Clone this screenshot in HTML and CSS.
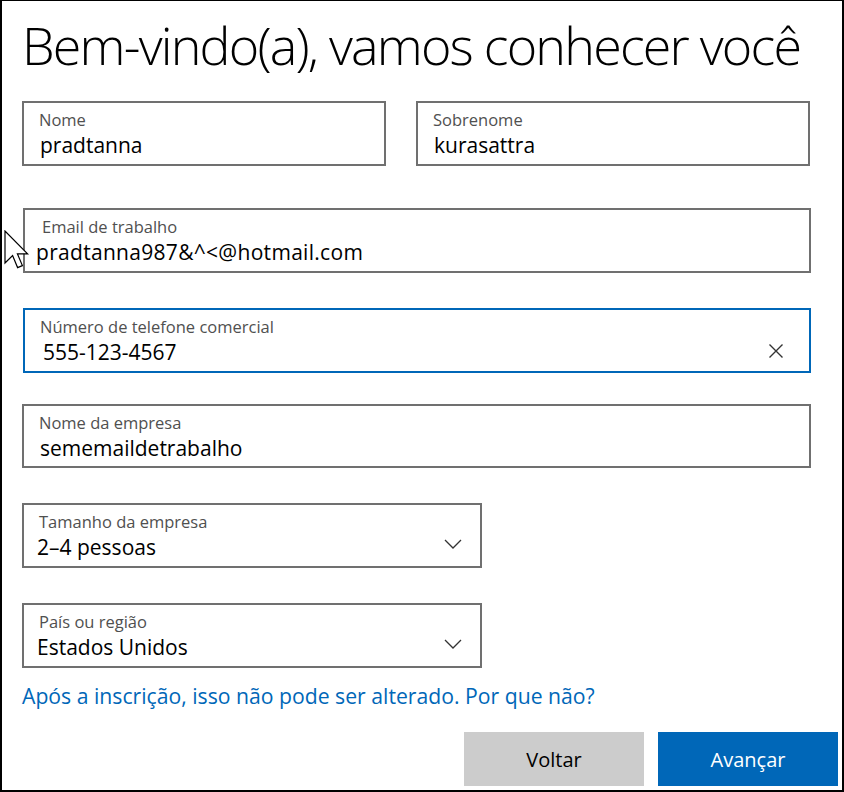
FILE: index.html
```html
<!DOCTYPE html>
<html lang="pt-BR">
<head>
<meta charset="utf-8">
<title>Bem-vindo(a)</title>
<link rel="stylesheet" href="styles.css">
</head>
<body>
<div class="frame">
  <h1 class="title">Bem-vindo(a), vamos conhecer você</h1>

  <div class="row">
    <div class="field field--first">
      <div class="label">Nome</div>
      <div class="value">pradtanna</div>
    </div>
    <div class="field field--last">
      <div class="label">Sobrenome</div>
      <div class="value">kurasattra</div>
    </div>
  </div>

  <div class="field field--wide field--email">
    <div class="label label--email">Email de trabalho</div>
    <div class="value value--email">pradtanna987&amp;^&lt;@hotmail.com</div>
  </div>

  <div class="field field--wide field--phone field--focus">
    <div class="field-text">
      <div class="label">Número de telefone comercial</div>
      <div class="value value--phone">555-123-4567</div>
    </div>
    <svg class="clear-icon" width="16" height="16" viewBox="0 0 16 16" aria-hidden="true">
      <path d="M1.5 1.5 L14.5 14.5 M14.5 1.5 L1.5 14.5" stroke="#333" stroke-width="1.4" fill="none"/>
    </svg>
  </div>

  <div class="field field--wide field--company">
    <div class="label">Nome da empresa</div>
    <div class="value">sememaildetrabalho</div>
  </div>

  <div class="field field--select field--size">
    <div class="field-text">
      <div class="label">Tamanho da empresa</div>
      <div class="value value--select">2–4 pessoas</div>
    </div>
    <svg class="chevron" width="18" height="10" viewBox="0 0 18 10" aria-hidden="true">
      <path d="M1 1 L9 9 L17 1" stroke="#333" stroke-width="1.3" fill="none"/>
    </svg>
  </div>

  <div class="field field--select field--country">
    <div class="field-text">
      <div class="label">País ou região</div>
      <div class="value value--select">Estados Unidos</div>
    </div>
    <svg class="chevron" width="18" height="10" viewBox="0 0 18 10" aria-hidden="true">
      <path d="M1 1 L9 9 L17 1" stroke="#333" stroke-width="1.3" fill="none"/>
    </svg>
  </div>

  <a class="info-link" href="#">Após a inscrição, isso não pode ser alterado. Por que não?</a>

  <div class="actions">
    <button class="btn btn--back" type="button">Voltar</button>
    <button class="btn btn--next" type="button">Avançar</button>
  </div>

  <svg class="cursor" width="26" height="40" viewBox="0 0 13 20" aria-hidden="true">
    <path d="M0.5 0.5 L0.5 16.5 L4.3 12.8 L6.8 18.8 L9.2 17.8 L6.7 11.9 L11.8 11.9 Z" fill="#fff" stroke="#000" stroke-width="0.6" stroke-linejoin="miter"/>
  </svg>
</div>
</body>
</html>
```

FILE: styles.css
```css
html, body {
  margin: 0;
  padding: 0;
  background: #fff;
}

body {
  font-family: "Open Sans", "Noto Sans", "Liberation Sans", sans-serif;
  color: #000;
}

.frame {
  position: relative;
  width: 844px;
  height: 792px;
  box-sizing: border-box;
  border-style: solid;
  border-color: #000;
  border-width: 1px 2px 2px 2px;
  padding: 0 0 0 20px;
  overflow: hidden;
}

.title {
  margin: 0;
  padding-top: 14px;
  height: 100px;
  box-sizing: border-box;
  font-size: 52px;
  line-height: 60px;
  font-weight: 300;
  letter-spacing: -1.8px;
  color: #000;
  white-space: nowrap;
}

.row {
  display: flex;
  gap: 30px;
}

.field {
  height: 65px;
  box-sizing: border-box;
  border: 2px solid #707070;
  padding: 0 15px;
  display: flex;
  flex-direction: column;
}

.field--first { width: 364px; }
.field--last { width: 394px; padding-left: 15px; }

.field--wide { width: 789px; }
.field--email { margin-top: 42px; margin-left: 1px; width: 788px; }
.field--phone { margin-top: 35px; margin-left: 1px; width: 788px; }
.field--company { margin-top: 31px; height: 64px; }
.field--select { width: 460px; }
.field--size { margin-top: 35px; }
.field--country { margin-top: 35px; }

.field--focus { border-color: #0067b8; }

.field--phone,
.field--select {
  flex-direction: row;
  align-items: center;
  justify-content: space-between;
}

.field-text {
  display: flex;
  flex-direction: column;
  align-self: stretch;
}

.label {
  margin-top: 6px;
  font-size: 16.5px;
  line-height: 21px;
  color: #505050;
  white-space: nowrap;
}

.label--email { margin-left: 2px; }

.value {
  margin-top: 1px;
  margin-left: 1px;
  font-size: 21px;
  line-height: 28px;
  color: #000;
  white-space: nowrap;
}

.value--email { margin-left: -4px; letter-spacing: 0.3px; }
.value--phone { margin-left: 3px; }
.value--select { margin-left: -2px; }

.clear-icon {
  margin-top: 20px;
  margin-right: 10px;
}

.chevron {
  margin-top: 16px;
  margin-right: 3px;
}

.info-link {
  display: block;
  margin-top: 14px;
  font-size: 21.2px;
  line-height: 28px;
  color: #0067b8;
  text-decoration: none;
  white-space: nowrap;
}

.actions {
  display: flex;
  justify-content: flex-end;
  gap: 14px;
  margin-top: 22px;
  padding-right: 4px;
}

.btn {
  width: 180px;
  height: 54px;
  border: none;
  margin: 0;
  font-family: inherit;
  font-size: 20px;
  cursor: pointer;
}

.btn--back { background: #cccccc; color: #000; }
.btn--next { background: #0067b8; color: #fff; }

.cursor {
  position: absolute;
  left: 2px;
  top: 229px;
}
```
